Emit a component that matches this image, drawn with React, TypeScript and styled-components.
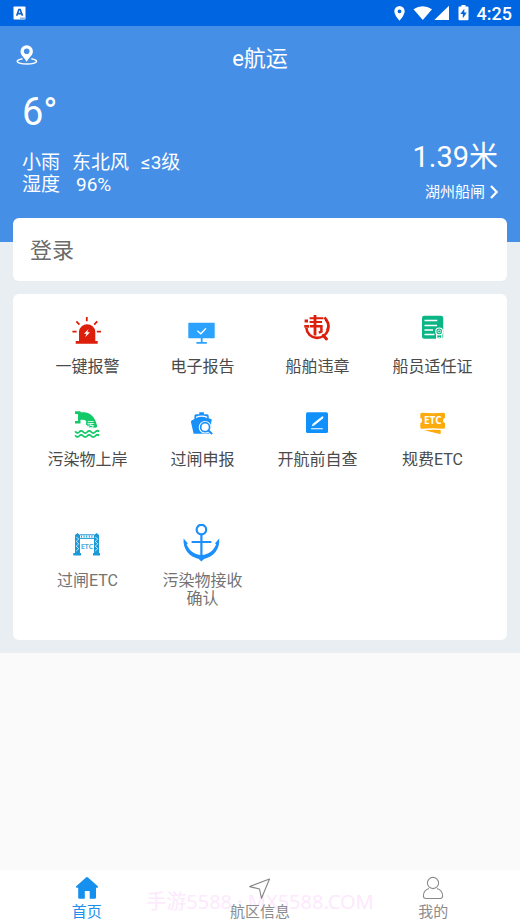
import React from "react";
import styled, { createGlobalStyle } from "styled-components";

const GlobalStyle = createGlobalStyle`
  * { box-sizing: border-box; }
  body {
    margin: 0;
    background: #fafafa;
    font-family: Roboto, "Noto Sans CJK SC", sans-serif;
  }
  button { border: 0; padding: 0; background: none; font: inherit; color: inherit; cursor: pointer; }
  a { color: inherit; text-decoration: none; }
  svg { display: block; }
`;

const Page = styled.div`
  min-height: 100vh;
  display: flex;
  flex-direction: column;
`;

const StatusBar = styled.div`
  height: 26px;
  padding: 0 8px 0 13px;
  display: flex;
  align-items: center;
  justify-content: space-between;
  background: #0065e1;
  color: #fff;
`;

const StatusGroup = styled.div`
  display: flex;
  align-items: center;
`;

const Clock = styled.time`
  margin-left: 7px;
  padding-top: 1px;
  font-size: 18px;
  line-height: 25px;
  font-weight: 500;
`;

const Content = styled.div`
  padding-bottom: 13px;
  background: #e9eef2;
`;

const Hero = styled.header`
  padding-bottom: 40px;
  background: #468fe7;
  color: #fff;
`;

const TitleBar = styled.div`
  height: 66px;
  padding: 0 16px;
  display: grid;
  grid-template-columns: 1fr auto 1fr;
  align-items: center;
`;

const LocateButton = styled.button`
  justify-self: start;
  padding-bottom: 8px;
`;

const Title = styled.h1`
  margin: 0;
  font-size: 22px;
  line-height: 30px;
  font-weight: 400;
`;

const Conditions = styled.div`
  padding: 0 22px;
  display: flex;
  align-items: flex-end;
  justify-content: space-between;
`;

const Weather = styled.div`
  padding-bottom: 6px;
  font-size: 19px;
  line-height: 22px;
`;

const Temperature = styled.div`
  margin-bottom: 20px;
  font-size: 38px;
  line-height: 40px;
`;

const WeatherLine = styled.div<{ $gap: number }>`
  display: flex;
  gap: ${(p) => p.$gap}px;
`;

const Water = styled.div`
  display: flex;
  flex-direction: column;
  align-items: flex-end;
  gap: 8px;
`;

const WaterLevel = styled.div`
  font-size: 29px;
  line-height: 34px;
`;

const StationButton = styled.button`
  display: flex;
  align-items: center;
  gap: 5px;
  font-size: 15px;
  line-height: 20px;
`;

const LoginCard = styled.button`
  display: block;
  width: calc(100% - 26px);
  margin: -24px 13px 13px;
  padding: 17px 17px 15px;
  border-radius: 6px;
  background: #fff;
  color: #6b6b6b;
  font-size: 22px;
  line-height: 31px;
  text-align: left;
`;

const ServiceCard = styled.section`
  margin: 0 13px;
  padding: 16px 17px 32px;
  border-radius: 6px;
  background: #fff;
`;

const ServiceGrid = styled.div<{ $muted?: boolean }>`
  display: grid;
  grid-template-columns: repeat(4, 1fr);
  row-gap: 27px;
  align-items: start;
  margin-top: ${(p) => (p.$muted ? 55 : 0)}px;
  color: ${(p) => (p.$muted ? "#737373" : "#4a4a4a")};
`;

const ServiceButton = styled.button`
  display: flex;
  flex-direction: column;
  align-items: center;
  gap: 8px;
  font-size: 16px;
  line-height: 18px;
`;

const ServiceLabel = styled.span`
  max-width: 84px;
`;

const TabBar = styled.nav`
  position: relative;
  margin-top: auto;
  height: 54px;
  display: flex;
  background: #fff;
`;

const Watermark = styled.div`
  position: absolute;
  inset: 20px 0 auto;
  text-align: center;
  font-family: "Noto Sans", "Noto Sans CJK SC", sans-serif;
  font-size: 20px;
  line-height: 24px;
  color: #fde9fd;
`;

const Tab = styled.a<{ $active?: boolean }>`
  position: relative;
  flex: 1;
  padding-top: 6px;
  display: flex;
  flex-direction: column;
  align-items: center;
  gap: 2px;
  font-size: 15px;
  line-height: 20px;
  color: ${(p) => (p.$active ? "#1b8fea" : "#8c8c8c")};
`;

const ServiceIcon = ({ children }: { children: React.ReactNode }) => (
  <svg width="41" height="40" viewBox="0 0 41 40" fill="none" aria-hidden="true">
    {children}
  </svg>
);

const Siren = () => (
  <ServiceIcon>
    <path d="M12 31V21.5a8.2 8.2 0 0 1 16.3 0V31h2.4v2.7h-22V31z" fill="#dc1e0a" />
    <path d="M19.8 7v4.3M9.4 11.4l3 3.2M30.2 11.4l-3 3.2M5.4 21.7h4.2M29.8 21.7H34" stroke="#dc1e0a" strokeWidth="1.8" />
    <path d="M21.6 19l-4.7 4.8h2.6l-1.3 3.4 4.8-5h-2.7z" fill="#fff" />
  </ServiceIcon>
);

const Monitor = () => (
  <ServiceIcon>
    <path d="M7 12.7h25q.7 0 .7.7v14.2q0 .7-.7.7H7q-.7 0-.7-.7V13.4q0-.7.7-.7zM18.8 28h1.8v4h4.2v1.7H14.4V32h4.4z" fill="#2ba2fe" />
    <path d="M15.3 20.8l3.5 3 5.2-5.6" stroke="#fff" strokeWidth="1.3" />
  </ServiceIcon>
);

const Violation = () => (
  <ServiceIcon>
    <g stroke="#dc1e0a">
      <path d="M27.4 7.4a11.6 11.6 0 0 1-7.8 20.5A10.5 10.5 0 0 1 9.4 18" strokeWidth="2.6" />
      <path d="M28.4 9.5a10 10 0 0 1 1.6 11" strokeWidth="2" />
      <path d="M26.3 25.4l3.2 3.6" strokeWidth="3" strokeLinecap="round" />
      <path d="M7.3 16.3h4.9M7.6 11h3.4" strokeWidth="2.8" />
      <path d="M12.6 8.3h13.8M12.6 12h12.4" strokeWidth="2" />
      <path d="M13 16.3h11.4v5.4l-2.6 1" strokeWidth="2.5" />
      <path d="M18 5v20.5" strokeWidth="2.8" />
    </g>
  </ServiceIcon>
);

const Certificate = () => (
  <ServiceIcon>
    <rect x="10" y="5.7" width="21.2" height="23" rx="2.2" fill="#0cb585" />
    <path d="M12.5 10.5h12.8M12.5 15.5h12.5M12.5 20h8.5M12.5 24.5h10" stroke="#fff" strokeWidth="1.5" />
    <path d="M24.7 24.2v5l2.5-1.4 2.6 1.4v-5z" fill="#0cb585" stroke="#fff" strokeWidth="1.3" />
    <circle cx="27.2" cy="21.4" r="3.4" fill="#0cb585" stroke="#fff" strokeWidth="1.2" />
    <circle cx="27.2" cy="21.4" r="1.4" stroke="#d7f5ec" strokeWidth="1" />
  </ServiceIcon>
);

const Outfall = () => (
  <ServiceIcon>
    <path d="M8 8.3h5.5v1h4.2c6.3.5 10.6 5.7 12.2 12.8.8 2.2-.7 3-2.6 2.3-1.4 1-2.8 1-3.8-.1-1.6.6-2.9-.2-3.1-1.8-1.5-.4-1.8-1.7-1.2-2.9.4-1.9-1-2.6-3-2.8h-2.7v3.6H8V18h3v-7H8z" fill="#12c968" />
    <text x="20" y="23.5" fontSize="7" fontWeight="700" fill="#fff" fontFamily="'Noto Sans CJK SC', sans-serif">污</text>
    <path d="M8.2 28.2q2 3 4 .8t4 0 4 0 4 0 4 0 4-.5M8.2 32.2q2 3 4 .8t4 0 4 0 4 0 4 0 4-.5" stroke="#12c968" strokeWidth="1.8" />
  </ServiceIcon>
);

const ShipSearch = () => (
  <ServiceIcon>
    <path d="M17.3 9.3h4.6v2h3.2q1.6 0 1.6 1.8v2.2l3 .9-.6 4.6v9.9H11.6L9 19.2q-.4-1.4 1-2l2.4-1.1v-3q0-1.8 1.6-1.8h3.3z" fill="#1890fa" />
    <path d="M14 14.3q5.6-2.2 11.2 0" stroke="#fff" strokeWidth="1.3" />
    <circle cx="23.1" cy="24.2" r="6.3" fill="#fff" />
    <path d="M25 28l4 5h3v-4l-3.5-3z" fill="#fff" />
    <circle cx="23.1" cy="24.2" r="4.5" stroke="#1890fa" strokeWidth="1.7" />
    <path d="M26.4 27.4l3.2 3" stroke="#1890fa" strokeWidth="2.1" strokeLinecap="round" />
  </ServiceIcon>
);

const EditSquare = () => (
  <ServiceIcon>
    <rect x="9" y="9.3" width="22" height="20.7" rx="1.6" fill="#1090fb" />
    <path d="M16.5 21.7l7.5-6" stroke="#fff" strokeWidth="2.2" />
    <path d="M24.6 15.2l.8-.7" stroke="#fff" strokeWidth="2.2" strokeLinecap="round" />
    <path d="M14.8 23.3l.8-2.5 1.6 1.9z" fill="#fff" />
    <path d="M14 25.7h11.8" stroke="#d5ecff" strokeWidth="1.2" />
  </ServiceIcon>
);

const Ticket = () => (
  <ServiceIcon>
    <path d="M10 9.7q11 .9 21.4 0 1.8 0 1.6 1.5v3.6q-2 .4-2 2.7t2 2.8v4q0 1.5-1.7 1.5-10.6-.9-21.3 0-1.7 0-1.7-1.5v-4q1.8-.5 1.8-2.8t-1.8-2.7v-3.6q0-1.5 1.7-1.5z" fill="#fdab0c" />
    <path d="M12 27.3q8-1 16.7-.3v3.4q0 .6-.7.5z" fill="#fdab0c" />
    <text x="20.8" y="21.4" fontSize="10" fontWeight="700" fill="#fff" textAnchor="middle" fontFamily="'Noto Sans', sans-serif">ETC</text>
  </ServiceIcon>
);

const Gantry = () => (
  <ServiceIcon>
    <path d="M8 29V11l2.5-2 2.5 2v18h1v2.4H6.3V29zM27 29V11l2.5-2 2.5 2v18h1v2.4h-7V29z" fill="#1b99d8" />
    <path d="M13 10.8h14M13 14.4h14" stroke="#1b99d8" strokeWidth="1" />
    <path d="M14 12.6h12" stroke="#1b99d8" strokeWidth="2" strokeDasharray="1 1.6" />
    <path d="M9.2 13l2.6 2-2.6 2.4 2.6 2.4-2.6 2.4 2.6 2.4-2.6 2.4M28.2 13l2.6 2-2.6 2.4 2.6 2.4-2.6 2.4 2.6 2.4-2.6 2.4" stroke="#fff" strokeWidth=".7" />
    <text x="20" y="25.3" fontSize="7" fill="#1b99d8" stroke="#1b99d8" strokeWidth=".2" textAnchor="middle" fontFamily="'Open Sans', sans-serif">ETC</text>
  </ServiceIcon>
);

const Anchor = () => (
  <ServiceIcon>
    <circle cx="19.4" cy="5.6" r="4.8" stroke="#1c8ffb" strokeWidth="2.2" />
    <path d="M19.4 10.5V35M9.6 18h19.8" stroke="#1c8ffb" strokeWidth="2.2" />
    <path d="M1.6 14.6l4.3 5-1.3.4c2.2 6.2 7.4 10.7 14.8 11 7.4-.3 12.6-4.8 14.8-11l-1.3-.4 4.3-5c1 10-5.2 18.4-15.2 20.4l-2.6 2.6-2.6-2.6C6.8 33 .6 24.6 1.6 14.6z" fill="#1c8ffb" />
  </ServiceIcon>
);

const services = [
  { label: "一键报警", Icon: Siren },
  { label: "电子报告", Icon: Monitor },
  { label: "船舶违章", Icon: Violation },
  { label: "船员适任证", Icon: Certificate },
  { label: "污染物上岸", Icon: Outfall },
  { label: "过闸申报", Icon: ShipSearch },
  { label: "开航前自查", Icon: EditSquare },
  { label: "规费ETC", Icon: Ticket },
];

const extraServices = [
  { label: "过闸ETC", Icon: Gantry },
  { label: "污染物接收确认", Icon: Anchor },
];

const Services = ({ items, muted }: { items: typeof services; muted?: boolean }) => (
  <ServiceGrid $muted={muted}>
    {items.map(({ label, Icon }) => (
      <ServiceButton key={label} type="button">
        <Icon />
        <ServiceLabel>{label}</ServiceLabel>
      </ServiceButton>
    ))}
  </ServiceGrid>
);

const HomeIcon = () => (
  <svg width="24" height="24" viewBox="0 0 24 24" fill="#1590ee" aria-hidden="true">
    <path d="M11 1.5q1-.8 2 0l9.8 8.7q.9 1.3-.6 1.6H21v9.7q0 1.3-1.3 1.3h-5V15H9.8v7.8H4.500q-1.3 0-1.3-1.3v-9.7H1.8Q.3 11.5 1.2 10.2z" />
  </svg>
);

const NavigateIcon = () => (
  <svg width="24" height="24" viewBox="0 0 24 24" fill="none" stroke="#858585" strokeWidth="1.1" strokeLinejoin="round" aria-hidden="true">
    <path d="M21.5 3L1.7 10.6l9.8 2.4 2 9.3z" />
  </svg>
);

const PersonIcon = () => (
  <svg width="24" height="24" viewBox="0 0 24 24" fill="none" stroke="#8a8a8a" strokeWidth="1.1" aria-hidden="true">
    <circle cx="12" cy="7" r="5.6" />
    <path d="M8 12.5c-3.6 1-5.6 4.2-5.6 7.7q.2 2.2 2.4 2.3h14.4q2.2-.1 2.4-2.3c0-3.5-2-6.7-5.6-7.7" />
  </svg>
);

export default function App() {
  return (
    <Page>
      <GlobalStyle />
      <StatusBar>
        <svg width="13" height="14" viewBox="0 0 13 14" aria-hidden="true">
          <rect x=".5" y=".5" width="12" height="13" rx=".8" fill="#fff" />
          <path d="M3.7 9.8l2.2-6.3h1.3l2.3 6.3M4.7 7.6h3.8" fill="none" stroke="#0f62c8" strokeWidth="1.6" />
          <path d="M7 12.2h5" stroke="#6fa2e2" strokeWidth="1.2" />
        </svg>
        <StatusGroup>
          <svg width="77" height="18" viewBox="0 0 77 18" fill="#fff" aria-hidden="true">
            <path fillRule="evenodd" d="M6.5 2a5.2 5.2 0 0 0-5.2 5.2C1.3 11 6.5 16.7 6.5 16.7S11.7 11 11.7 7.2A5.2 5.2 0 0 0 6.5 2zm0 3.4a1.9 1.9 0 1 1 0 3.8 1.9 1.9 0 0 1 0-3.8z" />
            <path d="M20.5 5.3q9-6.3 18.5 0L29.8 16z" />
            <path d="M56 1.8V16H41.3z" />
            <path fillRule="evenodd" d="M68.5 1h4v1.5h2q1 0 1 1V15q0 1.2-1 1.2h-8q-1 0-1-1.2V3.5q0-1 1-1h2zM71.3 4.8l-4 5.3h2.5v4.2l4-5.7h-2.5z" />
          </svg>
          <Clock>4:25</Clock>
        </StatusGroup>
      </StatusBar>

      <Content>
        <Hero>
          <TitleBar>
            <LocateButton type="button" aria-label="定位">
              <svg width="22" height="20" viewBox="0 0 22 20" fill="#fff" aria-hidden="true">
                <path fillRule="evenodd" d="M10.7.2a6.2 6.2 0 0 0-6.2 6.2c0 3.8 4.2 6.4 6.2 10.3 2-3.9 6.2-6.5 6.2-10.3A6.2 6.2 0 0 0 10.7.2zm0 3.3a2.8 2.8 0 1 1 0 5.6 2.8 2.8 0 0 1 0-5.6z" />
                <path d="M6.5 13.7c-8 1.4-7 5.3 4.4 5.3s12.4-3.9 4.4-5.3" fill="none" stroke="#fff" strokeWidth="1.4" />
              </svg>
            </LocateButton>
            <Title>e航运</Title>
          </TitleBar>
          <Conditions>
            <Weather>
              <Temperature>6°</Temperature>
              <WeatherLine $gap={12}>
                <span>小雨</span>
                <span>东北风</span>
                <span>≤3级</span>
              </WeatherLine>
              <WeatherLine $gap={16}>
                <span>湿度</span>
                <span>96%</span>
              </WeatherLine>
            </Weather>
            <Water>
              <WaterLevel>1.39米</WaterLevel>
              <StationButton type="button">
                湖州船闸
                <svg width="8" height="14" viewBox="0 0 8 14" fill="none" stroke="#fff" strokeWidth="2.2" aria-hidden="true">
                  <path d="M1 1l5.7 6L1 13" />
                </svg>
              </StationButton>
            </Water>
          </Conditions>
        </Hero>

        <LoginCard type="button">登录</LoginCard>

        <ServiceCard>
          <Services items={services} />
          <Services items={extraServices} muted />
        </ServiceCard>
      </Content>

      <TabBar>
        <Watermark>手游5588 · MX5588.COM</Watermark>
        <Tab href="#home" $active aria-current="page">
          <HomeIcon />
          首页
        </Tab>
        <Tab href="#waterway">
          <NavigateIcon />
          航区信息
        </Tab>
        <Tab href="#mine">
          <PersonIcon />
          我的
        </Tab>
      </TabBar>
    </Page>
  );
}
